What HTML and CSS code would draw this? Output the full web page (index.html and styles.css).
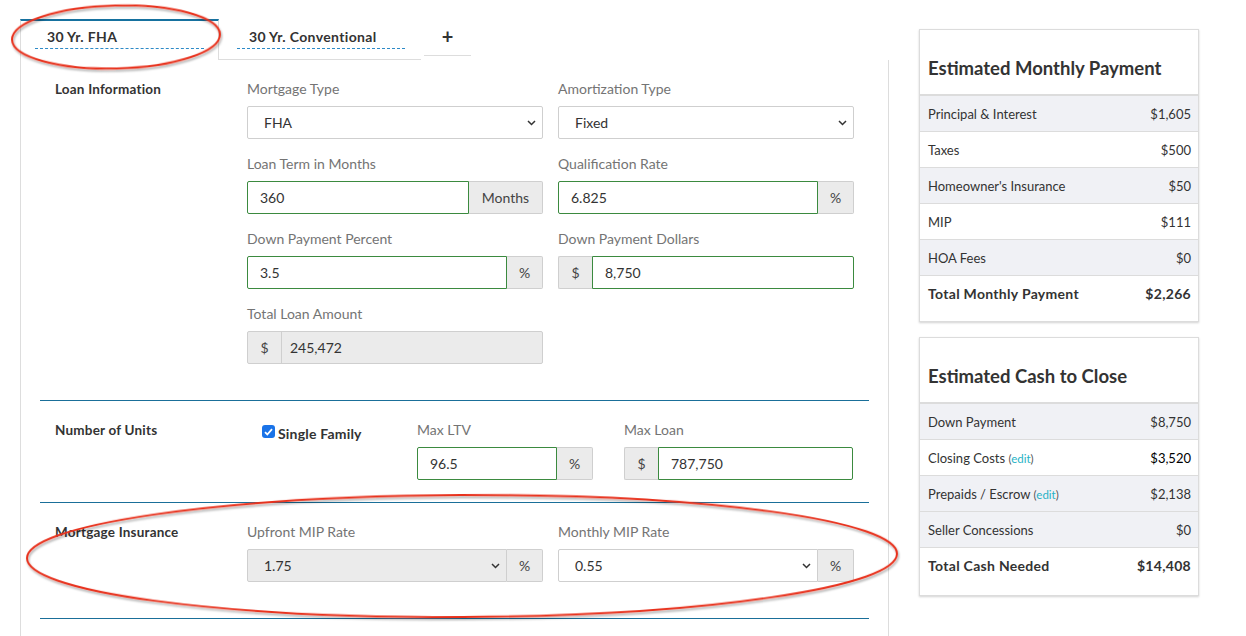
FILE: index.html
```html
<!DOCTYPE html>
<html lang="en">
<head>
<meta charset="utf-8">
<title>Loan Scenario</title>
<link rel="stylesheet" href="styles.css">
</head>
<body>
<div class="page">
  <div class="main">
    <div class="tabs">
      <div class="tab tab-active"><span class="tab-label">30 Yr. FHA</span></div>
      <div class="tab tab-plain"><span class="tab-label">30 Yr. Conventional</span></div>
      <div class="tab-add">+</div>
    </div>
    <div class="panel">
      <section class="section section-loan">
        <div class="section-title">Loan Information</div>
        <div class="fields fields-two">
          <div class="field">
            <div class="field-label">Mortgage Type</div>
            <div class="select"><span>FHA</span><svg class="chev" width="9" height="6" viewBox="0 0 9 6"><path d="M1 1l3.5 3.5L8 1" fill="none" stroke="#333" stroke-width="1.5"/></svg></div>
          </div>
          <div class="field">
            <div class="field-label">Amortization Type</div>
            <div class="select"><span>Fixed</span><svg class="chev" width="9" height="6" viewBox="0 0 9 6"><path d="M1 1l3.5 3.5L8 1" fill="none" stroke="#333" stroke-width="1.5"/></svg></div>
          </div>
          <div class="field">
            <div class="field-label">Loan Term in Months</div>
            <div class="control"><div class="input input-right">360</div><div class="addon addon-right addon-months">Months</div></div>
          </div>
          <div class="field">
            <div class="field-label">Qualification Rate</div>
            <div class="control"><div class="input input-right">6.825</div><div class="addon addon-right">%</div></div>
          </div>
          <div class="field">
            <div class="field-label">Down Payment Percent</div>
            <div class="control"><div class="input input-right">3.5</div><div class="addon addon-right">%</div></div>
          </div>
          <div class="field">
            <div class="field-label">Down Payment Dollars</div>
            <div class="control"><div class="addon addon-left addon-dollar">$</div><div class="input input-left">8,750</div></div>
          </div>
          <div class="field">
            <div class="field-label">Total Loan Amount</div>
            <div class="control control-readonly"><div class="addon addon-dollar addon-inner">$</div><div class="readonly-value">245,472</div></div>
          </div>
        </div>
      </section>

      <section class="section section-units">
        <div class="section-title">Number of Units</div>
        <div class="fields fields-units">
          <label class="check">
            <span class="check-box"><svg width="9" height="8" viewBox="0 0 9 8"><path d="M1 4.2l2.3 2.3L8 1.2" fill="none" stroke="#fff" stroke-width="1.8"/></svg></span>
            <span class="check-text">Single Family</span>
          </label>
          <div class="field">
            <div class="field-label">Max LTV</div>
            <div class="control"><div class="input input-right">96.5</div><div class="addon addon-right">%</div></div>
          </div>
          <div class="field">
            <div class="field-label">Max Loan</div>
            <div class="control"><div class="addon addon-left addon-dollar">$</div><div class="input input-left">787,750</div></div>
          </div>
        </div>
      </section>

      <section class="section section-mi">
        <div class="section-title">Mortgage Insurance</div>
        <div class="fields fields-two">
          <div class="field">
            <div class="field-label">Upfront MIP Rate</div>
            <div class="control">
              <div class="select select-grouped select-disabled"><span>1.75</span><svg class="chev" width="9" height="6" viewBox="0 0 9 6"><path d="M1 1l3.5 3.5L8 1" fill="none" stroke="#333" stroke-width="1.5"/></svg></div>
              <div class="addon addon-right">%</div>
            </div>
          </div>
          <div class="field">
            <div class="field-label">Monthly MIP Rate</div>
            <div class="control">
              <div class="select select-grouped"><span>0.55</span><svg class="chev" width="9" height="6" viewBox="0 0 9 6"><path d="M1 1l3.5 3.5L8 1" fill="none" stroke="#333" stroke-width="1.5"/></svg></div>
              <div class="addon addon-right">%</div>
            </div>
          </div>
        </div>
      </section>
    </div>
  </div>

  <aside class="side">
    <div class="card">
      <div class="card-title">Estimated Monthly Payment</div>
      <div class="row row-shade"><span>Principal &amp; Interest</span><span>$1,605</span></div>
      <div class="row"><span>Taxes</span><span>$500</span></div>
      <div class="row row-shade"><span>Homeowner's Insurance</span><span>$50</span></div>
      <div class="row"><span>MIP</span><span>$111</span></div>
      <div class="row row-shade"><span>HOA Fees</span><span>$0</span></div>
      <div class="row row-total"><span>Total Monthly Payment</span><span>$2,266</span></div>
    </div>
    <div class="card">
      <div class="card-title">Estimated Cash to Close</div>
      <div class="row row-shade"><span>Down Payment</span><span>$8,750</span></div>
      <div class="row"><span>Closing Costs <span class="edit">(<a class="edit-link">edit</a>)</span></span><span class="strong-value">$3,520</span></div>
      <div class="row row-shade"><span>Prepaids / Escrow <span class="edit">(<a class="edit-link">edit</a>)</span></span><span>$2,138</span></div>
      <div class="row row-shade"><span>Seller Concessions</span><span>$0</span></div>
      <div class="row row-total row-total-tall"><span>Total Cash Needed</span><span>$14,408</span></div>
    </div>
  </aside>
</div>

<svg class="annotations" width="1246" height="636" viewBox="0 0 1246 636">
  <defs>
    <filter id="shadow" x="-10%" y="-30%" width="120%" height="160%">
      <feDropShadow dx="1" dy="2" stdDeviation="1.2" flood-color="#000" flood-opacity="0.35"/>
    </filter>
  </defs>
  <ellipse cx="116" cy="37" rx="104" ry="31.5" transform="rotate(-1.5 116 37)" fill="none" stroke="#e8331f" stroke-width="2" filter="url(#shadow)"/>
  <ellipse cx="462" cy="556" rx="435" ry="61" transform="rotate(-0.3 462 556)" fill="none" stroke="#e8331f" stroke-width="2" filter="url(#shadow)"/>
</svg>
</body>
</html>
```

FILE: styles.css
```css
* { box-sizing: border-box; }

html, body {
  margin: 0;
  padding: 0;
  background: #fff;
}

body {
  font-family: Lato, "Open Sans", "Liberation Sans", sans-serif;
  color: #333;
  width: 1246px;
  height: 636px;
  overflow: hidden;
}

.page {
  display: flex;
  align-items: flex-start;
  padding: 19px 0 0 20px;
}

/* ---------- main column ---------- */
.main {
  width: 869px;
  flex: none;
}

.tabs {
  display: flex;
  align-items: flex-start;
}

.tab {
  height: 41px;
  border-top: 2px solid transparent;
  padding-top: 8px;
  font-size: 14px;
  font-weight: 700;
  letter-spacing: 0.35px;
  color: #333;
}

.tab-label {
  display: block;
  padding: 0 12px 3px;
  line-height: 16px;
  border-bottom: 1px dashed #2d8ac7;
}

.tab-active {
  width: 199px;
  border-top-color: #16719f;
  border-left: 1px solid #ddd;
  border-right: 1px solid #ddd;
  padding-left: 14px;
  padding-right: 14px;
}

.tab-plain {
  width: 202px;
  border-bottom: 1px solid #ddd;
  padding-left: 18px;
  padding-right: 16px;
}

.tab-add {
  width: 47px;
  height: 37px;
  margin-left: 3px;
  border-bottom: 1px solid #ddd;
  text-align: center;
  font-size: 20px;
  font-weight: 700;
  line-height: 34px;
  color: #333;
}

.panel {
  border-left: 1px solid #ddd;
  border-right: 1px solid #ddd;
  padding: 0 19px 40px;
}

.section {
  display: grid;
  grid-template-columns: 207px 1fr;
  border-bottom: 1px solid #1a6f99;
  padding-top: 20px;
  padding-bottom: 36px;
}

.section-units {
  padding-bottom: 22px;
}

.section-title {
  padding-left: 15px;
  font-size: 13.5px;
  font-weight: 700;
  letter-spacing: 0.2px;
  line-height: 18px;
  color: #333;
}

.fields {
  display: grid;
  row-gap: 16px;
}

.fields-two {
  grid-template-columns: 296px 296px;
  column-gap: 15px;
}

.fields-units {
  grid-template-columns: 139px 176px 229px;
  column-gap: 31px;
}

.field {
  display: flex;
  flex-direction: column;
}

.field-label {
  font-size: 14px;
  line-height: 18px;
  color: #747474;
  margin-bottom: 8px;
}

.control {
  display: flex;
  height: 33px;
}

.input {
  flex: 1;
  border: 1px solid #3b8a3f;
  background: #fff;
  padding: 0 12px;
  font-size: 14px;
  line-height: 31px;
  color: #333;
  min-width: 0;
}

.input-right { border-radius: 2px 0 0 2px; }
.input-left { border-radius: 0 2px 2px 0; }

.addon {
  flex: none;
  width: 36px;
  display: flex;
  align-items: center;
  justify-content: center;
  background: #ebebeb;
  border: 1px solid #cfcfcf;
  font-size: 14px;
  color: #444;
}

.addon-right {
  border-left: none;
  border-radius: 0 2px 2px 0;
}

.addon-left {
  border-right: none;
  border-radius: 2px 0 0 2px;
}

.addon-months { width: 74px; }
.addon-dollar { width: 34px; }

.control-readonly {
  border: 1px solid #cfcfcf;
  border-radius: 2px;
  background: #ebebeb;
}

.addon-inner {
  border: none;
  border-right: 1px solid #cfcfcf;
  background: transparent;
}

.readonly-value {
  flex: 1;
  padding: 0 8px;
  font-size: 14px;
  line-height: 31px;
  color: #333;
}

.select {
  height: 33px;
  display: flex;
  align-items: center;
  justify-content: space-between;
  border: 1px solid #cfcfcf;
  border-radius: 2px;
  background: #fff;
  padding: 0 6px 0 16px;
  font-size: 14px;
  color: #333;
}

.select-grouped {
  flex: 1;
  border-radius: 2px 0 0 2px;
}

.select-disabled {
  background: #ebebeb;
}

.chev { flex: none; }

.check {
  display: flex;
  align-items: flex-start;
  padding-left: 15px;
  padding-top: 4px;
}

.check-box {
  width: 13px;
  height: 13px;
  flex: none;
  border-radius: 3px;
  background: #1a73e8;
  display: flex;
  align-items: center;
  justify-content: center;
}

.check-text {
  margin-left: 3px;
  font-size: 14px;
  font-weight: 700;
  letter-spacing: 0.2px;
  line-height: 17px;
  color: #333;
}

/* ---------- side column ---------- */
.side {
  flex: none;
  width: 280px;
  margin-left: 30px;
  padding-top: 10px;
  display: flex;
  flex-direction: column;
  gap: 15px;
}

.card {
  border: 1px solid #dcdcdc;
  background: #fff;
  box-shadow: 0 1px 2px rgba(0, 0, 0, 0.18);
}

.card-title {
  padding: 27px 8px 15px;
  font-size: 18.5px;
  font-weight: 700;
  line-height: 22px;
  color: #333;
  border-bottom: 2px solid #dcdcdc;
}

.row {
  height: 36px;
  display: flex;
  align-items: center;
  justify-content: space-between;
  padding: 0 7px 0 8px;
  border-bottom: 1px solid #dcdcdc;
  font-size: 13px;
  color: #333;
}

.row-shade {
  background: #f0f1f5;
}

.row-total {
  height: 45px;
  align-items: flex-start;
  padding-top: 9px;
  border-bottom: none;
  font-size: 14px;
  font-weight: 700;
  letter-spacing: 0.3px;
}

.row-total-tall {
  height: 47px;
}

.edit {
  font-size: 11.5px;
  color: #555;
}

.edit-link {
  color: #26b2c6;
}

.strong-value {
  color: #000;
}

/* ---------- annotation overlay ---------- */
.annotations {
  position: absolute;
  top: 0;
  left: 0;
  pointer-events: none;
}
```
